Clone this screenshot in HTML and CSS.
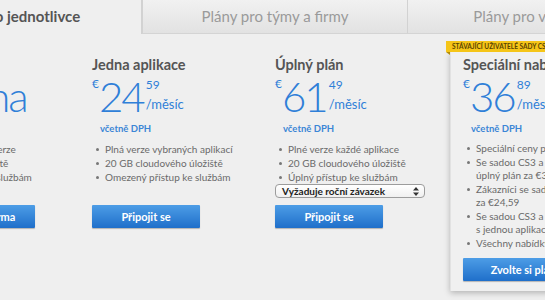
FILE: index.html
```html
<!DOCTYPE html>
<html lang="cs">
<head>
    <meta charset="UTF-8">
    <title>Plány</title>
    <link rel="stylesheet" href="styles.css">
</head>
<body>
    <div class="tabs">
        <div class="tab active">Plány pro jednotlivce</div>
        <div class="tab">Plány pro týmy a firmy</div>
        <div class="tab">Plány pro vzdělávání</div>
    </div>

    <div class="plans">
        <div class="plan plan-free">
            <h2 class="plan-title">&nbsp;</h2>
            <div class="price"><span class="amount">Zdarma</span></div>
            <div class="vat">&nbsp;</div>
            <ul class="features">
                <li>Zkušební verze</li>
                <li>2 GB úložiště</li>
                <li>Přístup ke službám</li>
            </ul>
            <button class="btn">Zkusit zdarma</button>
        </div>

        <div class="plan">
            <h2 class="plan-title">Jedna aplikace</h2>
            <div class="price">
                <span class="cur">€</span><span class="amount">24</span>
                <span class="tail"><span class="cents">59</span><span class="per">/měsíc</span></span>
            </div>
            <div class="vat">včetně DPH</div>
            <ul class="features">
                <li>Plná verze vybraných aplikací</li>
                <li>20 GB cloudového úložiště</li>
                <li>Omezený přístup ke službám</li>
            </ul>
            <button class="btn">Připojit se</button>
        </div>

        <div class="plan plan-full">
            <h2 class="plan-title">Úplný plán</h2>
            <div class="price">
                <span class="cur">€</span><span class="amount">61</span>
                <span class="tail"><span class="cents">49</span><span class="per">/měsíc</span></span>
            </div>
            <div class="vat">včetně DPH</div>
            <ul class="features">
                <li>Plné verze každé aplikace</li>
                <li>20 GB cloudového úložiště</li>
                <li>Úplný přístup ke službám</li>
            </ul>
            <div class="select">
                <span>Vyžaduje roční závazek</span>
                <svg width="6" height="9" viewBox="0 0 6 9"><path d="M0 3.5L3 0L6 3.5Z M0 5.5L3 9L6 5.5Z" fill="#333"/></svg>
            </div>
            <button class="btn">Připojit se</button>
        </div>

        <div class="plan card">
            <div class="badge">Stávající uživatelé sady CS3 až CS5.5</div>
            <h2 class="plan-title">Speciální nabídka</h2>
            <div class="price">
                <span class="cur">€</span><span class="amount">36</span>
                <span class="tail"><span class="cents">89</span><span class="per">/měsíc</span></span>
            </div>
            <div class="vat">včetně DPH</div>
            <ul class="features">
                <li>Speciální ceny pro stávající zákazníky</li>
                <li>Se sadou CS3 a novější získáte<br>úplný plán za €36,89</li>
                <li>Zákazníci se sadou CS3 a novější<br>za €24,59</li>
                <li>Se sadou CS3 a novější získáte<br>s jednou aplikací za €12,29</li>
                <li>Všechny nabídky vyžadují závazek</li>
            </ul>
            <button class="btn">Zvolte si plán</button>
        </div>
    </div>
</body>
</html>
```

FILE: styles.css
```css
body {
    margin: 0;
    width: 545px;
    height: 300px;
    overflow: hidden;
    background-color: #efefef;
    font-family: 'Lato', 'DejaVu Sans', sans-serif;
    color: #666;
}
.tabs {
    display: flex;
    margin-left: -120px;
    height: 34px;
}
.tab {
    flex: 0 0 265px;
    box-sizing: border-box;
    text-align: center;
    line-height: 33px;
    font-size: 15px;
    color: #9a9a9a;
    background: linear-gradient(#f1f1f1, #e2e2e2);
    border-left: 1px solid #d2d2d2;
    border-bottom: 1px solid #d4d4d4;
    white-space: nowrap;
}
.tab.active {
    flex-basis: 262px;
    background: #efefef;
    color: #555;
    font-weight: bold;
    border-left: none;
    border-bottom: none;
    border-right: 1px solid #d2d2d2;
}
.plans {
    display: flex;
    align-items: flex-start;
    margin-left: -73px;
}
.plan {
    flex: 0 0 165px;
    box-sizing: border-box;
    padding-top: 21px;
}
.plan + .plan {
    flex-basis: 183px;
}
.plan-full {
    flex-basis: 175px !important;
}
.plan-title {
    margin: 0;
    font-size: 14.5px;
    line-height: 20px;
    font-weight: bold;
    color: #555;
    white-space: nowrap;
}
.price {
    display: flex;
    align-items: flex-start;
    height: 36px;
    margin-top: 3px;
    color: #2f7fd8;
    white-space: nowrap;
}
.cur {
    font-size: 12px;
    line-height: 12px;
}
.amount {
    font-size: 42px;
    font-weight: 300;
    line-height: 36px;
    letter-spacing: -2px;
}
.plan-free .amount {
    margin-left: -25px;
}
.tail {
    display: flex;
    flex-direction: column;
    margin-left: 2px;
}
.cents {
    font-size: 12px;
    line-height: 12px;
    margin-top: 1px;
}
.per {
    font-size: 13px;
    line-height: 16px;
    margin-top: 5px;
}
.vat {
    margin: 9px 0 0 8px;
    font-size: 9.5px;
    line-height: 12px;
    font-weight: bold;
    color: #3b86d6;
}
.features {
    list-style: none;
    margin: 7px 0 0;
    padding: 0 0 0 13px;
    font-size: 10px;
    line-height: 14px;
    color: #6a6a6a;
    white-space: nowrap;
}
.plan-free .features {
    padding-left: 23px;
}
.features li {
    position: relative;
}
.features li::before {
    content: "";
    position: absolute;
    left: -9px;
    top: 6px;
    width: 3px;
    height: 3px;
    border-radius: 50%;
    background: #777;
}
.btn {
    display: block;
    width: 108px;
    height: 23px;
    margin-top: 21px;
    border: none;
    border-radius: 1px;
    background: linear-gradient(#4d9de6, #1f6fca);
    box-shadow: 0 1px 1px rgba(0,0,0,0.25);
    color: white;
    font-family: inherit;
    font-size: 11px;
    font-weight: bold;
}
.plan-full .btn {
    margin-top: 7px;
}
.select {
    display: flex;
    justify-content: space-between;
    align-items: center;
    box-sizing: border-box;
    width: 150px;
    height: 14px;
    margin-top: 0;
    padding: 0 5px 0 6px;
    background: linear-gradient(#ffffff, #f0f0f0);
    border: 1px solid #9c9c9c;
    border-radius: 4px;
    font-size: 10px;
    font-weight: bold;
    color: #222;
}
.card {
    position: relative;
    margin-top: 18px;
    padding: 3px 0 10px 12px;
    width: 200px;
    flex-basis: 200px !important;
    background: #f0f0f0;
    border-left: 1px solid #e2e2e2;
    box-shadow: 0 2px 6px rgba(0,0,0,0.25);
}
.card .features {
    font-size: 10px;
    line-height: 13.5px;
}
.card .features li::before {
    top: 5px;
}
.card .btn {
    margin-top: 8px;
    width: 120px;
}
.badge {
    position: absolute;
    top: -11px;
    left: -5px;
    height: 11px;
    padding: 0 6px;
    background: #f5c518;
    color: #5b4300;
    font-size: 6.5px;
    font-weight: bold;
    line-height: 11px;
    text-transform: uppercase;
    white-space: nowrap;
}
.badge::after {
    content: "";
    position: absolute;
    left: 0;
    bottom: -3px;
    border-top: 3px solid #b18a0a;
    border-left: 4px solid transparent;
}
```
